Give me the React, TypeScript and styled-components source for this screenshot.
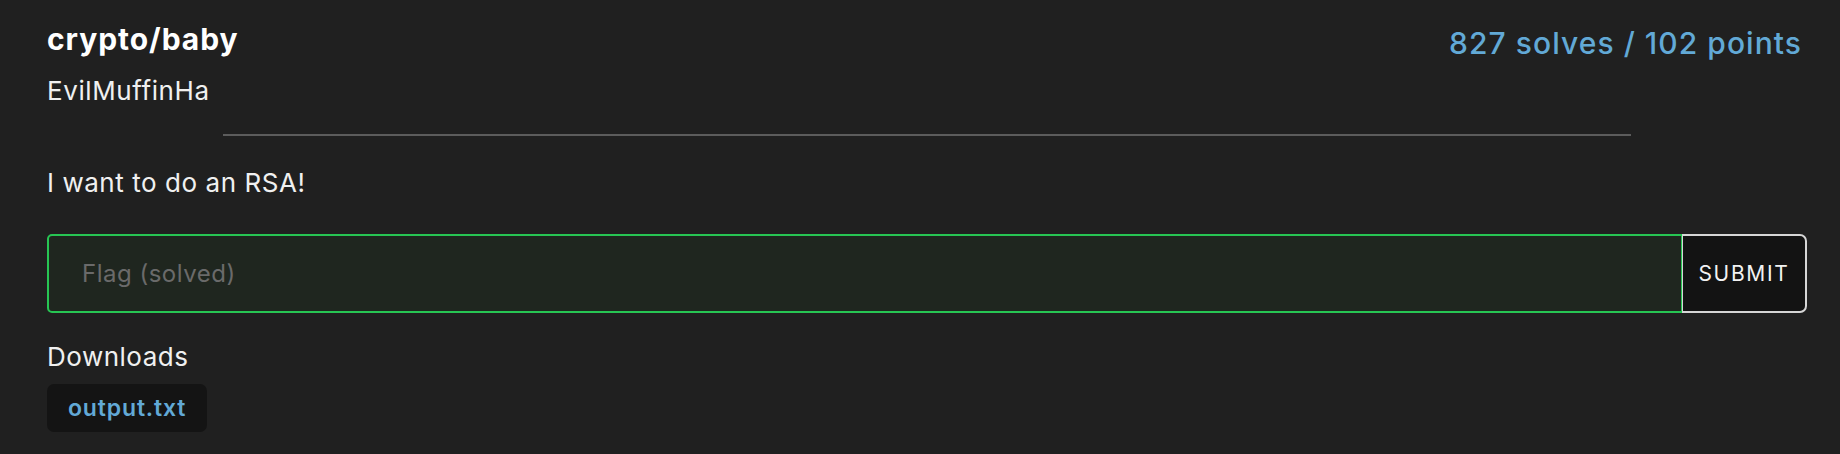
import React from "react";
import styled, { createGlobalStyle } from "styled-components";

const Global = createGlobalStyle`
  html, body {
    margin: 0;
    padding: 0;
    background: #202020;
  }
  body {
    font-family: Inter, "Noto Sans", "Liberation Sans", sans-serif;
    color: #f2f2f2;
  }
  * { box-sizing: border-box; }
`;

const Page = styled.div`
  padding: 0 33px 0 47px;
  min-height: 454px;
  background: #202020;
`;

const Header = styled.div`
  display: flex;
  justify-content: space-between;
  align-items: flex-start;
  padding-top: 22px;
`;

const TitleBlock = styled.div`
  display: flex;
  flex-direction: column;
`;

const Title = styled.h1`
  margin: 0;
  font-size: 30px;
  line-height: 34px;
  font-weight: 700;
  letter-spacing: 0.95px;
  color: #ffffff;
`;

const Author = styled.div`
  margin-top: 20px;
  font-size: 26px;
  line-height: 30px;
  letter-spacing: 0.6px;
  color: #f0f0f0;
`;

const Stats = styled.div`
  margin-top: 3px;
  padding-right: 5px;
  font-size: 30px;
  line-height: 36px;
  font-weight: 500;
  letter-spacing: 1.05px;
  color: #62a9d6;
`;

const Divider = styled.hr`
  width: 80%;
  margin: 28px auto 0;
  border: none;
  height: 2px;
  background: #5c5c5c;
`;

const Description = styled.p`
  margin: 32px 0 0;
  font-size: 26px;
  line-height: 30px;
  letter-spacing: 0.55px;
  color: #f0f0f0;
`;

const FlagForm = styled.form`
  display: flex;
  margin-top: 36px;
  height: 79px;
`;

const FlagInput = styled.input`
  flex: 1;
  min-width: 0;
  height: 100%;
  background: #1f261f;
  border: 2px solid #27c553;
  border-radius: 5px 0 0 5px;
  padding: 0 33px;
  font-family: inherit;
  font-size: 24px;
  letter-spacing: 0.5px;
  color: #f0f0f0;
  outline: none;
  &::placeholder {
    color: #6a6a6a;
  }
`;

const SubmitButton = styled.button`
  width: 125px;
  height: 100%;
  margin-left: -1px;
  background: #131313;
  border: 2px solid #d6d6d6;
  border-left-width: 1px;
  border-radius: 0 7px 7px 0;
  font-family: inherit;
  font-size: 21px;
  letter-spacing: 1.7px;
  color: #f2f2f2;
  padding: 0;
  cursor: pointer;
`;

const DownloadsLabel = styled.div`
  margin-top: 29px;
  font-size: 26px;
  line-height: 30px;
  letter-spacing: 0.5px;
  color: #f0f0f0;
`;

const FileList = styled.div`
  display: flex;
  gap: 10px;
  margin-top: 12px;
`;

const FileChip = styled.a`
  display: inline-flex;
  align-items: center;
  height: 48px;
  padding: 0 21px;
  background: #141414;
  border-radius: 7px;
  font-size: 23px;
  font-weight: 600;
  letter-spacing: 0.85px;
  color: #62a9d6;
  text-decoration: none;
`;

export default function App() {
  return (
    <>
      <Global />
      <Page>
        <Header>
          <TitleBlock>
            <Title>crypto/baby</Title>
            <Author>EvilMuffinHa</Author>
          </TitleBlock>
          <Stats>827 solves / 102 points</Stats>
        </Header>
        <Divider />
        <Description>I want to do an RSA!</Description>
        <FlagForm onSubmit={(e) => e.preventDefault()}>
          <FlagInput placeholder="Flag (solved)" />
          <SubmitButton type="submit">SUBMIT</SubmitButton>
        </FlagForm>
        <DownloadsLabel>Downloads</DownloadsLabel>
        <FileList>
          <FileChip href="#">output.txt</FileChip>
        </FileList>
      </Page>
    </>
  );
}
